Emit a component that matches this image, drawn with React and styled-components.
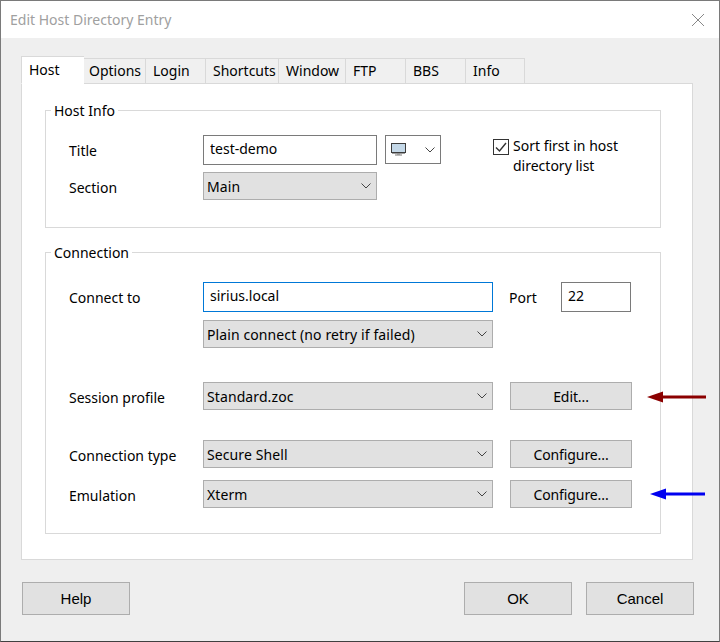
import React from 'react';
import styled, { createGlobalStyle } from 'styled-components';

const GlobalStyle = createGlobalStyle`
  html, body {
    margin: 0;
    padding: 0;
    background: #efefef;
  }
  * {
    box-sizing: border-box;
  }
`;

const Win = styled.div`
  width: 720px;
  height: 642px;
  display: flex;
  flex-direction: column;
  background: #efefef;
  border: 1px solid #7a7a7a;
  border-bottom-color: #404040;
  font-family: 'Noto Sans', sans-serif;
  font-size: 14px;
  color: #000;
  overflow: hidden;
`;

const TitleBar = styled.div`
  height: 37px;
  flex: none;
  background: #fff;
  display: flex;
  align-items: center;
  justify-content: space-between;
  padding: 0 15px 0 9px;
  color: #a0a0a0;
`;

const Content = styled.div`
  flex: 1;
  display: flex;
  flex-direction: column;
  padding: 18px 0 0 20px;
`;

const TabBar = styled.div`
  display: flex;
  align-items: flex-end;
  height: 28px;
  margin-bottom: -1px;
  position: relative;
  z-index: 1;
`;

const Tab = styled.div`
  width: ${p => p.$w}px;
  height: ${p => (p.$active ? 28 : 26)}px;
  padding: ${p => (p.$active ? 3 : 2)}px 0 0 ${p => p.$pad}px;
  background: ${p => (p.$active ? '#fff' : '#f0f0f0')};
  border: 1px solid #d9d9d9;
  border-left-width: ${p => (p.$active ? 1 : 0)}px;
  border-bottom-color: ${p => (p.$active ? '#fff' : '#d9d9d9')};
  border-right-width: ${p => (p.$active ? 0 : 1)}px;
  line-height: 19px;
`;

const Panel = styled.div`
  width: 672px;
  height: 477px;
  background: #fff;
  border: 1px solid #d9d9d9;
  padding: 26px 0 0 23px;
`;

const Group = styled.div`
  position: relative;
  width: 616px;
  height: ${p => p.$h}px;
  margin-bottom: 24px;
  border: 1px solid #d9d9d9;
  padding: ${p => p.$pad}px 0 0 23px;
`;

const Legend = styled.span`
  position: absolute;
  top: -10px;
  left: 5px;
  padding: 0 3px;
  background: #fff;
  line-height: 19px;
`;

const Row = styled.div`
  position: relative;
  display: flex;
  align-items: flex-start;
  height: ${p => p.$h || 28}px;
  margin-top: ${p => p.$top || 0}px;
`;

const Label = styled.div`
  width: 134px;
  flex: none;
  line-height: 32px;
`;

const Input = styled.input`
  width: ${p => p.$w}px;
  height: 30px;
  flex: none;
  padding: 0 6px 3px;
  border: 1px solid ${p => (p.$focus ? '#0078d7' : '#7a7a7a')};
  background: #fff;
  font: inherit;
  color: #000;
  outline: none;
`;

const Select = styled.div`
  width: ${p => p.$w}px;
  height: 28px;
  flex: none;
  display: flex;
  align-items: center;
  justify-content: space-between;
  padding: 0 5px 0 3px;
  background: #e1e1e1;
  border: 1px solid #adadad;
  letter-spacing: 0.1px;
`;

const IconSelect = styled.div`
  width: 56px;
  height: 29px;
  margin-left: 8px;
  flex: none;
  display: flex;
  align-items: center;
  justify-content: space-between;
  padding: 0 5px;
  background: #fff;
  border: 1px solid #7a7a7a;
`;

const Sort = styled.div`
  display: flex;
  align-items: flex-start;
  margin-left: 52px;
  padding-top: 1px;
  line-height: 20px;
`;

const Check = styled.div`
  width: 16px;
  height: 16px;
  flex: none;
  margin: 3px 4px 0 0;
  display: flex;
  align-items: center;
  justify-content: center;
  background: #fff;
  border: 1px solid #333;
`;

const PortLabel = styled.div`
  width: 52px;
  margin-left: 16px;
  flex: none;
  line-height: 32px;
`;

const SideButton = styled.div`
  width: 122px;
  height: 28px;
  margin-left: 17px;
  flex: none;
  display: flex;
  align-items: center;
  justify-content: center;
  background: #e1e1e1;
  border: 1px solid #adadad;
  letter-spacing: -0.1px;
`;

const Arrow = styled.svg`
  position: absolute;
  top: ${p => p.$top}px;
  left: ${p => p.$left}px;
`;

const Footer = styled.div`
  display: flex;
  margin-top: 22px;
  padding-left: 1px;
`;

const FootButton = styled.div`
  width: 108px;
  height: 33px;
  margin-left: ${p => p.$gap || 0}px;
  display: flex;
  align-items: center;
  justify-content: center;
  background: #e1e1e1;
  border: 1px solid #adadad;
  font-family: 'Liberation Sans', sans-serif;
  font-size: 15px;
`;

const Chevron = () => (
  <svg width="10" height="6" viewBox="0 0 10 6" fill="none" stroke="#444" strokeWidth="1">
    <path d="M0.5 0.5l4.5 4.5L9.5 0.5" />
  </svg>
);

const Monitor = () => (
  <svg width="15" height="13" viewBox="0 0 15 13">
    <rect x="0.5" y="0.5" width="14" height="9" fill="#c4d8e8" stroke="#3c3c3c" />
    <path d="M1 9h13v1.5H1z" fill="#3c3c3c" />
    <path d="M6 10.5h3v1H6z" fill="#888" />
    <path d="M4 11.5h7v1H4z" fill="#777" />
  </svg>
);

const ArrowIcon = ({ left, top, color, w }) => (
  <Arrow $left={left} $top={top} width={w} height="12" viewBox={`0 0 ${w} 12`}>
    <path d={`M0 6L16 0.5V4.5H${w}V7.5H16V11.5z`} fill={color} />
  </Arrow>
);

const Drop = ({ w, children }) => (
  <Select $w={w}>
    {children}
    <Chevron />
  </Select>
);

const tabs = [
  ['Host', 63, 7],
  ['Options', 62, 5],
  ['Login', 60, 7],
  ['Shortcuts', 73, 7],
  ['Window', 67, 7],
  ['FTP', 60, 7],
  ['BBS', 60, 7],
  ['Info', 59, 7],
];

export default function App() {
  return (
    <Win>
      <GlobalStyle />
      <TitleBar>
        Edit Host Directory Entry
        <svg width="12" height="12" viewBox="0 0 12 12" stroke="#888" strokeWidth="1">
          <path d="M0 0l12 12M12 0L0 12" />
        </svg>
      </TitleBar>
      <Content>
        <TabBar>
          {tabs.map(([name, w, pad], i) => (
            <Tab key={name} $w={w} $pad={pad} $active={i === 0}>{name}</Tab>
          ))}
        </TabBar>
        <Panel>
          <Group $h={118} $pad={24}>
            <Legend>Host Info</Legend>
            <Row $h={30}>
              <Label>Title</Label>
              <Input $w={174} defaultValue="test-demo" />
              <IconSelect>
                <Monitor />
                <Chevron />
              </IconSelect>
              <Sort>
                <Check>
                  <svg width="12" height="11" viewBox="0 0 12 11" fill="none" stroke="#333" strokeWidth="1.4">
                    <path d="M1 5.5l3.5 3.5L11 1" />
                  </svg>
                </Check>
                <span>Sort first in host<br />directory list</span>
              </Sort>
            </Row>
            <Row $top={7}>
              <Label>Section</Label>
              <Drop w={174}>Main</Drop>
            </Row>
          </Group>
          <Group $h={282} $pad={29}>
            <Legend>Connection</Legend>
            <Row $h={30}>
              <Label>Connect to</Label>
              <Input $w={290} $focus defaultValue="sirius.local" />
              <PortLabel>Port</PortLabel>
              <Input $w={70} defaultValue="22" />
            </Row>
            <Row $top={8}>
              <Label />
              <Drop w={290}>Plain connect (no retry if failed)</Drop>
            </Row>
            <Row $top={34}>
              <Label>Session profile</Label>
              <Drop w={290}>Standard.zoc</Drop>
              <SideButton>Edit...</SideButton>
              <ArrowIcon left={578} top={9} color="#8b0000" w={59} />
            </Row>
            <Row $top={30}>
              <Label>Connection type</Label>
              <Drop w={290}>Secure Shell</Drop>
              <SideButton>Configure...</SideButton>
            </Row>
            <Row $top={12}>
              <Label>Emulation</Label>
              <Drop w={290}>Xterm</Drop>
              <SideButton>Configure...</SideButton>
              <ArrowIcon left={581} top={8} color="#0000f0" w={55} />
            </Row>
          </Group>
        </Panel>
        <Footer>
          <FootButton>Help</FootButton>
          <FootButton $gap={334}>OK</FootButton>
          <FootButton $gap={14}>Cancel</FootButton>
        </Footer>
      </Content>
    </Win>
  );
}
